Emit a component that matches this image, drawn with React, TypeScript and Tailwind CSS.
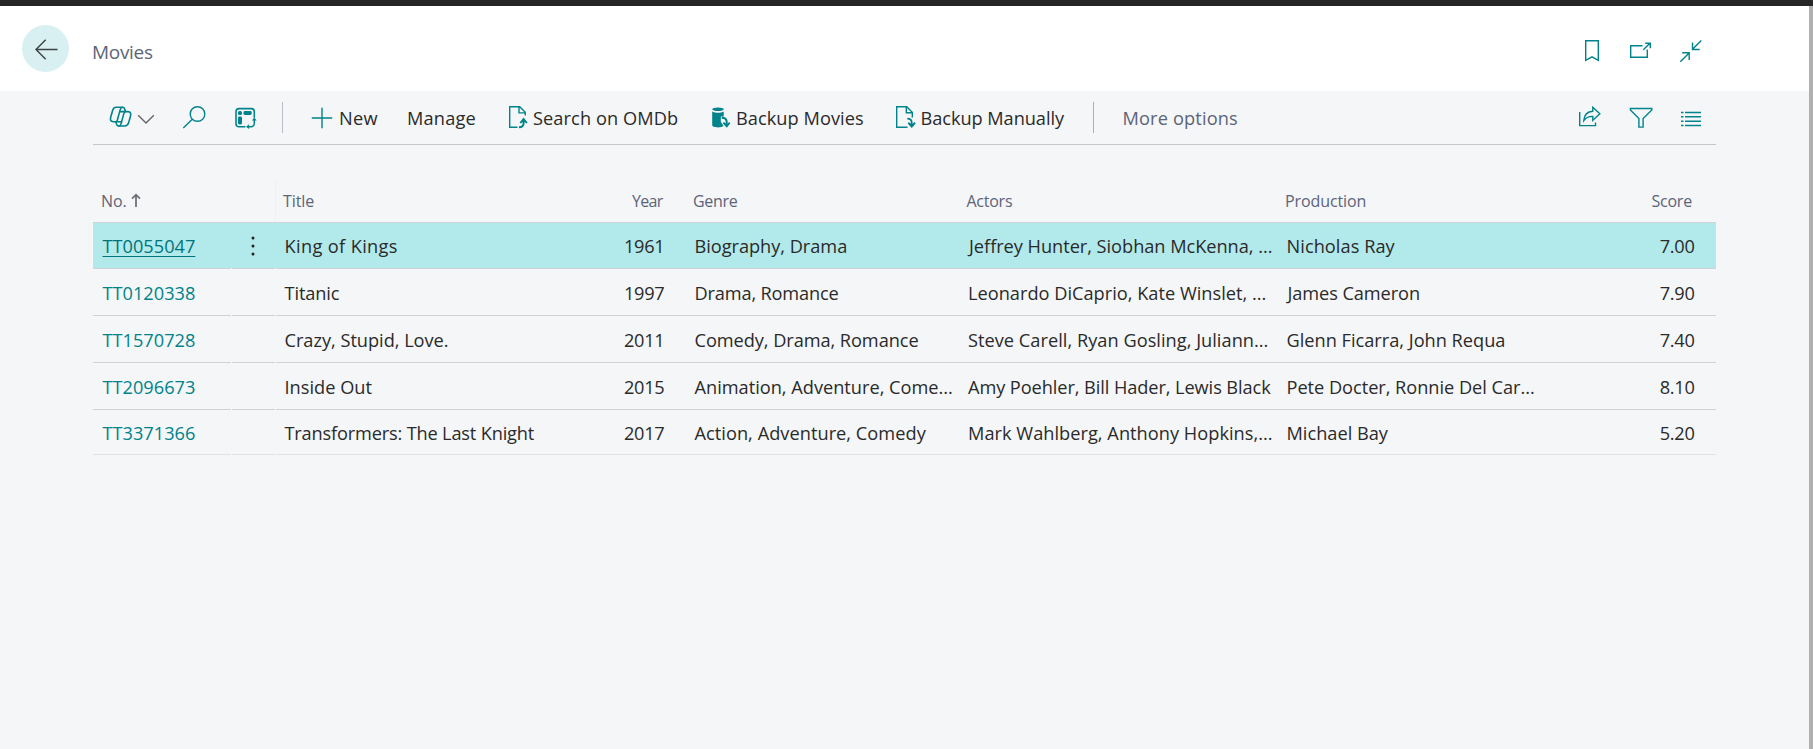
import type { ReactNode } from "react";

type Cell = { text: string; cls?: string };
type Movie = {
  id: Cell;
  title: Cell;
  year: string;
  genre: Cell;
  actors: Cell;
  production: Cell;
  score: string;
  row: string;
};

const movies: Movie[] = [
  {
    id: { text: "TT0055047" },
    title: { text: "King of Kings", cls: "tracking-[0.36px]" },
    year: "1961",
    genre: { text: "Biography, Drama", cls: "tracking-[-0.03px]" },
    actors: { text: "Jeffrey Hunter, Siobhan McKenna, ...", cls: "ml-[1px] tracking-[-0.03px]" },
    production: { text: "Nicholas Ray", cls: "tracking-[0.05px]" },
    score: "7.00",
    row: "h-[46px] bg-[#b2e9eb] *:pt-px",
  },
  {
    id: { text: "TT0120338" },
    title: { text: "Titanic", cls: "tracking-[-0.1px]" },
    year: "1997",
    genre: { text: "Drama, Romance", cls: "tracking-[-0.16px]" },
    actors: { text: "Leonardo DiCaprio, Kate Winslet, ...", cls: "tracking-[0.01px]" },
    production: { text: "James Cameron", cls: "ml-[1px] tracking-[-0.08px]" },
    score: "7.90",
    row: "h-[47px] *:pt-[2px]",
  },
  {
    id: { text: "TT1570728" },
    title: { text: "Crazy, Stupid, Love.", cls: "tracking-[-0.02px]" },
    year: "2011",
    genre: { text: "Comedy, Drama, Romance", cls: "tracking-[-0.06px]" },
    actors: { text: "Steve Carell, Ryan Gosling, Juliann...", cls: "tracking-[0.03px]" },
    production: { text: "Glenn Ficarra, John Requa" },
    score: "7.40",
    row: "h-[47px] *:pt-[2px]",
  },
  {
    id: { text: "TT2096673" },
    title: { text: "Inside Out", cls: "tracking-[0.02px]" },
    year: "2015",
    genre: { text: "Animation, Adventure, Come..." },
    actors: { text: "Amy Poehler, Bill Hader, Lewis Black", cls: "tracking-[-0.08px]" },
    production: { text: "Pete Docter, Ronnie Del Car...", cls: "tracking-[-0.03px]" },
    score: "8.10",
    row: "h-[47px] *:pt-[2px]",
  },
  {
    id: { text: "TT3371366" },
    title: { text: "Transformers: The Last Knight", cls: "tracking-[-0.17px]" },
    year: "2017",
    genre: { text: "Action, Adventure, Comedy", cls: "tracking-[0.04px]" },
    actors: { text: "Mark Wahlberg, Anthony Hopkins,...", cls: "tracking-[0.03px]" },
    production: { text: "Michael Bay" },
    score: "5.20",
    row: "h-[45px] *:pt-[2px] *:border-[#dfe2e6]",
  },
];

const COLUMNS = "grid grid-cols-[138px_44px_325px_85px_274px_319px_282px_156px]";
const CELL = "-mb-px flex items-center border-b border-[#cfd2d7]";

type IconProps = { w: number; h: number; color?: string; className?: string; children: ReactNode };

function Icon({ w, h, color = "text-[#00838a]", className = "", children }: IconProps) {
  return (
    <svg
      width={w}
      height={h}
      viewBox={`0 0 ${w} ${h}`}
      fill="none"
      stroke="currentColor"
      strokeWidth="1.4"
      className={`shrink-0 ${color} ${className}`}
    >
      {children}
    </svg>
  );
}

function TopBar() {
  return (
    <header className="flex h-[85px] items-start bg-white">
      <button className="mt-[19px] ml-[22px] flex size-[47px] shrink-0 items-center justify-center rounded-full bg-[#d9f0f2]">
        <Icon w={24} h={24} color="text-[#3a4244]">
          <path d="M23.500 12.500H2.200M11.700 2.700L2 12.500l9.700 9.700" />
        </Icon>
      </button>
      <h1 className="mt-[34px] ml-[23px] text-[19px] leading-6 tracking-[-0.3px] text-[#5c6478]">Movies</h1>
      <div className="mt-[33px] mr-[106px] ml-auto flex items-start">
        <Icon w={16} h={24}>
          <path d="M1.700 1.700h12.600v19.600L8 17.800l-6.300 3.500z" />
        </Icon>
        <Icon w={24} h={24} className="ml-[29px]">
          <path d="M13.500 6.700H1.700v11.600h16.600V10.500" />
          <path d="M14.300 10.700l6.700-6.400M16.200 4.200h5.100v5" />
        </Icon>
        <Icon w={24} h={24} className="ml-[26px]">
          <path d="M22.300 1.500l-8.800 8.800M13.500 3.500v7h7.200" />
          <path d="M1.300 22.700l8.800-8.800M3.200 13.700h7v7.200" />
        </Icon>
      </div>
    </header>
  );
}

function Toolbar() {
  return (
    <nav className="mr-[93px] ml-[93px] flex h-[54px] items-center border-b border-[#c3c6cb] text-[18.2px] leading-6 whitespace-nowrap text-[#2a2a2a]">
      <Icon w={24} h={24} className="mb-px ml-[15px]">
        <g strokeWidth="1.600" strokeLinejoin="round" strokeLinecap="round">
          <path d="M17.300 6.200L16.700 4C16.300 2.700 15.700 2.300 14.600 2.300H8.400C6.400 2.300 5.300 3.300 4.700 5.200L2.800 11.800C1.900 15 2.600 16.700 5.300 16.700H8" />
          <path d="M14.600 2.300C13.300 2.300 12.700 3 12.300 4.400L9.300 15.200C9 16.200 8.700 16.700 7.600 16.700" />
          <path d="M7.900 17l.700 2.300c.400 1.200 1 1.700 2.100 1.700h6.100c2 0 3.100-1 3.700-2.900l1.900-6.600c.900-3.200.200-4.900-2.500-4.900h-2.700" />
          <path d="M10.700 21c1.300 0 1.900-.700 2.300-2.100L16 8.100c.300-1 .600-1.500 1.700-1.500" />
          <path d="M11.700 6.600h5M8.600 16.700h5" />
        </g>
      </Icon>
      <Icon w={18} h={12} color="text-[#666]" className="mt-[3px] ml-[5px]">
        <path d="M1.200 2.200l7.800 7.800 7.800-7.800" />
      </Icon>
      <Icon w={26} h={26} className="ml-[26px]">
        <circle cx="16.500" cy="9" r="7.300" />
        <path d="M11.300 14.200L2.300 23" />
      </Icon>
      <Icon w={24} h={24} className="ml-[27px]">
        <path strokeWidth="1.600" d="M20.300 11.800V5.600a3 3 0 0 0-3-3H5a3 3 0 0 0-3 3v12.100a3 3 0 0 0 3 3h6.400" />
        <g fill="currentColor" stroke="none">
          <rect x="4" y="5" width="4" height="4" rx="1.600" />
          <rect x="9.500" y="5" width="8.200" height="4" rx="1.400" />
          <rect x="4" y="10.500" width="4" height="8" rx="1.400" />
          <path d="M20.300 11.500l2.400 3.100h-4.800zM12 20.700l3.100-2.400v4.800z" />
        </g>
        <path strokeWidth="1.500" d="M20.300 14v3.400a3.200 3.200 0 0 1-3.200 3.300H14.500" />
      </Icon>
      <span className="ml-[24px] h-[31px] w-px bg-[#b9bdc9]" />

      <Icon w={22} h={22} className="ml-[28px]">
        <path d="M11 .8v20.400M.8 11h20.400" />
      </Icon>
      <span className="ml-[6px] w-[68px] tracking-[0.3px]">New</span>
      <span className="w-[101px] tracking-[0.2px]">Manage</span>
      <Icon w={20} h={24} className="mb-px">
        <path d="M9.500 22.300H1.700V1.700h10l5.600 5.600v3.200M11 1.700v6.200h6.300" />
        <path strokeWidth="2" d="M11 22.300c3 0 4.600-1.400 4.600-4.300v-3" />
        <path fill="currentColor" stroke="none" d="M15.600 12.600l4 4.800-1.200 1.200-2.800-2.300-2.800 2.300-1.200-1.200z" />
      </Icon>
      <span className="ml-[5px] w-[174px] tracking-[0.09px]">Search on OMDb</span>
      <Icon w={20} h={24} className="mb-px ml-[4px]">
        <g fill="currentColor" stroke="none">
          <ellipse cx="7" cy="4.300" rx="5.700" ry="1.800" />
          <path d="M1.200 6.400c3 1.700 8.600 1.700 11.500 0v5.100H9.800v5.200l2.800 4.400c-2.600 2-11.400 1.600-11.400-.8z" />
          <path d="M15.800 22.800l-4.100-4.600 1.200-1.300 2.900 2.300 2.400-2.300 1.100 1.300z" />
        </g>
        <path strokeWidth="2" d="M10.700 12.800c3.400 0 5 1.500 5 4.400v3.600" />
      </Icon>
      <span className="ml-[5px] w-[158.500px] tracking-[0.06px]">Backup Movies</span>
      <Icon w={22} h={24} className="mb-px">
        <path d="M12.500 22.300H1.700V1.700h10l5.600 5.600v5.200M11.300 1.700v6.100h6" />
        <path strokeWidth="1.800" d="M12.300 13.700c2.800 0 4.400 1.300 4.400 4v3.500" />
        <path fill="currentColor" stroke="none" d="M16.700 23l-4-4.600 1.200-1.300 2.800 2.300 2.800-2.300 1.200 1.300z" />
      </Icon>
      <span className="ml-[4px] w-[172.500px] tracking-[-0.05px]">Backup Manually</span>
      <span className="h-[31px] w-px bg-[#a9afbf]" />
      <span className="ml-[28.500px] tracking-[0.15px] text-[#5c6478]">More options</span>

      <div className="mr-[14px] ml-auto flex items-center">
        <Icon w={24} h={24} className="mb-[2px]">
          <path d="M1.700 7v13.600h15.800v-3.200" />
          <path d="M14.800 2.300l7 6.500-7 6.600v-4c-4.400-.2-6.800 1-9 4.200C6.200 9.600 9.200 6.500 14.800 6.200z" />
        </Icon>
        <Icon w={24} h={24} className="ml-[27px]">
          <path d="M1.400 2.500h21.400v1.400l-8.700 8.600v8.600h-4.200v-8.600L1.400 3.900z" />
        </Icon>
        <Icon w={22} h={18} className="mt-[2px] ml-[27px]">
          <path d="M1 2.500h2.500M5 2.500h16M1 6.800h2.500M5 6.800h16M1 11.200h2.500M5 11.200h16M1 15.500h2.500M5 15.500h16" />
        </Icon>
      </div>
    </nav>
  );
}

function HeaderRow() {
  return (
    <div className={`${COLUMNS} h-[43px] border-b border-[#cfd2d7] text-[16px] leading-5 whitespace-nowrap text-[#5c6478] *:flex *:items-center`}>
      <div className="col-span-2 pl-[8px]">
        <span className="tracking-[-0.1px]">No.</span>
        <Icon w={10} h={14} color="text-[#6f7378]" className="mb-[3px] ml-[4px]">
          <path strokeWidth="1.800" d="M5 14V1.600M1 5.700l4-4 4 4" />
        </Icon>
      </div>
      <div className="border-l border-[#eef0f3] pl-[7px] tracking-[-0.1px]">Title</div>
      <div className="justify-end pr-[22.5px] tracking-[-0.7px]">Year</div>
      <div className="pl-[8px] tracking-[-0.3px]">Genre</div>
      <div className="pl-[7.5px] tracking-[-0.25px]">Actors</div>
      <div className="pl-[7px] tracking-[-0.1px]">Production</div>
      <div className="justify-end pr-[24px] tracking-[-0.2px]">Score</div>
    </div>
  );
}

function MovieRow({ movie, selected }: { movie: Movie; selected: boolean }) {
  return (
    <div className={`${COLUMNS} border-b border-[#f8f9fb] ${movie.row}`}>
      <div className={`${CELL} pl-[9.5px]`}>
        <a
          className={
            selected
              ? "text-[#00747b] underline decoration-1 underline-offset-[3px]"
              : "text-[#00838a]"
          }
        >
          {movie.id.text}
        </a>
      </div>
      <div className={`${CELL} ml-px pl-[19px]`}>
        {selected && (
          <Icon w={4} h={20} color="text-[#222]">
            <g fill="currentColor" stroke="none">
              <circle cx="2" cy="2" r="1.500" />
              <circle cx="2" cy="10" r="1.500" />
              <circle cx="2" cy="18" r="1.500" />
            </g>
          </Icon>
        )}
      </div>
      <div className={`${CELL} ml-px pl-[8.5px]`}>
        <span className={movie.title.cls}>{movie.title.text}</span>
      </div>
      <div className={`${CELL} justify-end pr-[20.5px] tracking-[-0.25px]`}>{movie.year}</div>
      <div className={`${CELL} pl-[9.5px]`}>
        <span className={movie.genre.cls}>{movie.genre.text}</span>
      </div>
      <div className={`${CELL} pl-[9px]`}>
        <span className={movie.actors.cls}>{movie.actors.text}</span>
      </div>
      <div className={`${CELL} pl-[8.5px]`}>
        <span className={movie.production.cls}>{movie.production.text}</span>
      </div>
      <div className={`${CELL} justify-end pr-[21.5px] tracking-[-0.3px]`}>{movie.score}</div>
    </div>
  );
}

export default function App() {
  return (
    <div className="flex h-[749px] w-[1813px] flex-col overflow-hidden bg-[#f5f6f8] font-['Open_Sans','Noto_Sans',sans-serif]">
      <div className="h-[6px] shrink-0 bg-[#262626]" />
      <div className="flex min-h-0 flex-1">
        <div className="flex w-[1809px] flex-col">
          <TopBar />
          <Toolbar />
          <main className="mt-[35px] ml-[93px] w-[1623px]">
            <HeaderRow />
            <div className="text-[18.2px] leading-6 whitespace-nowrap text-[#2a2a2a]">
              {movies.map((movie, i) => (
                <MovieRow key={movie.id.text} movie={movie} selected={i === 0} />
              ))}
            </div>
          </main>
        </div>
        <div className="w-[4px] bg-[#b0b0b0]" />
      </div>
    </div>
  );
}
